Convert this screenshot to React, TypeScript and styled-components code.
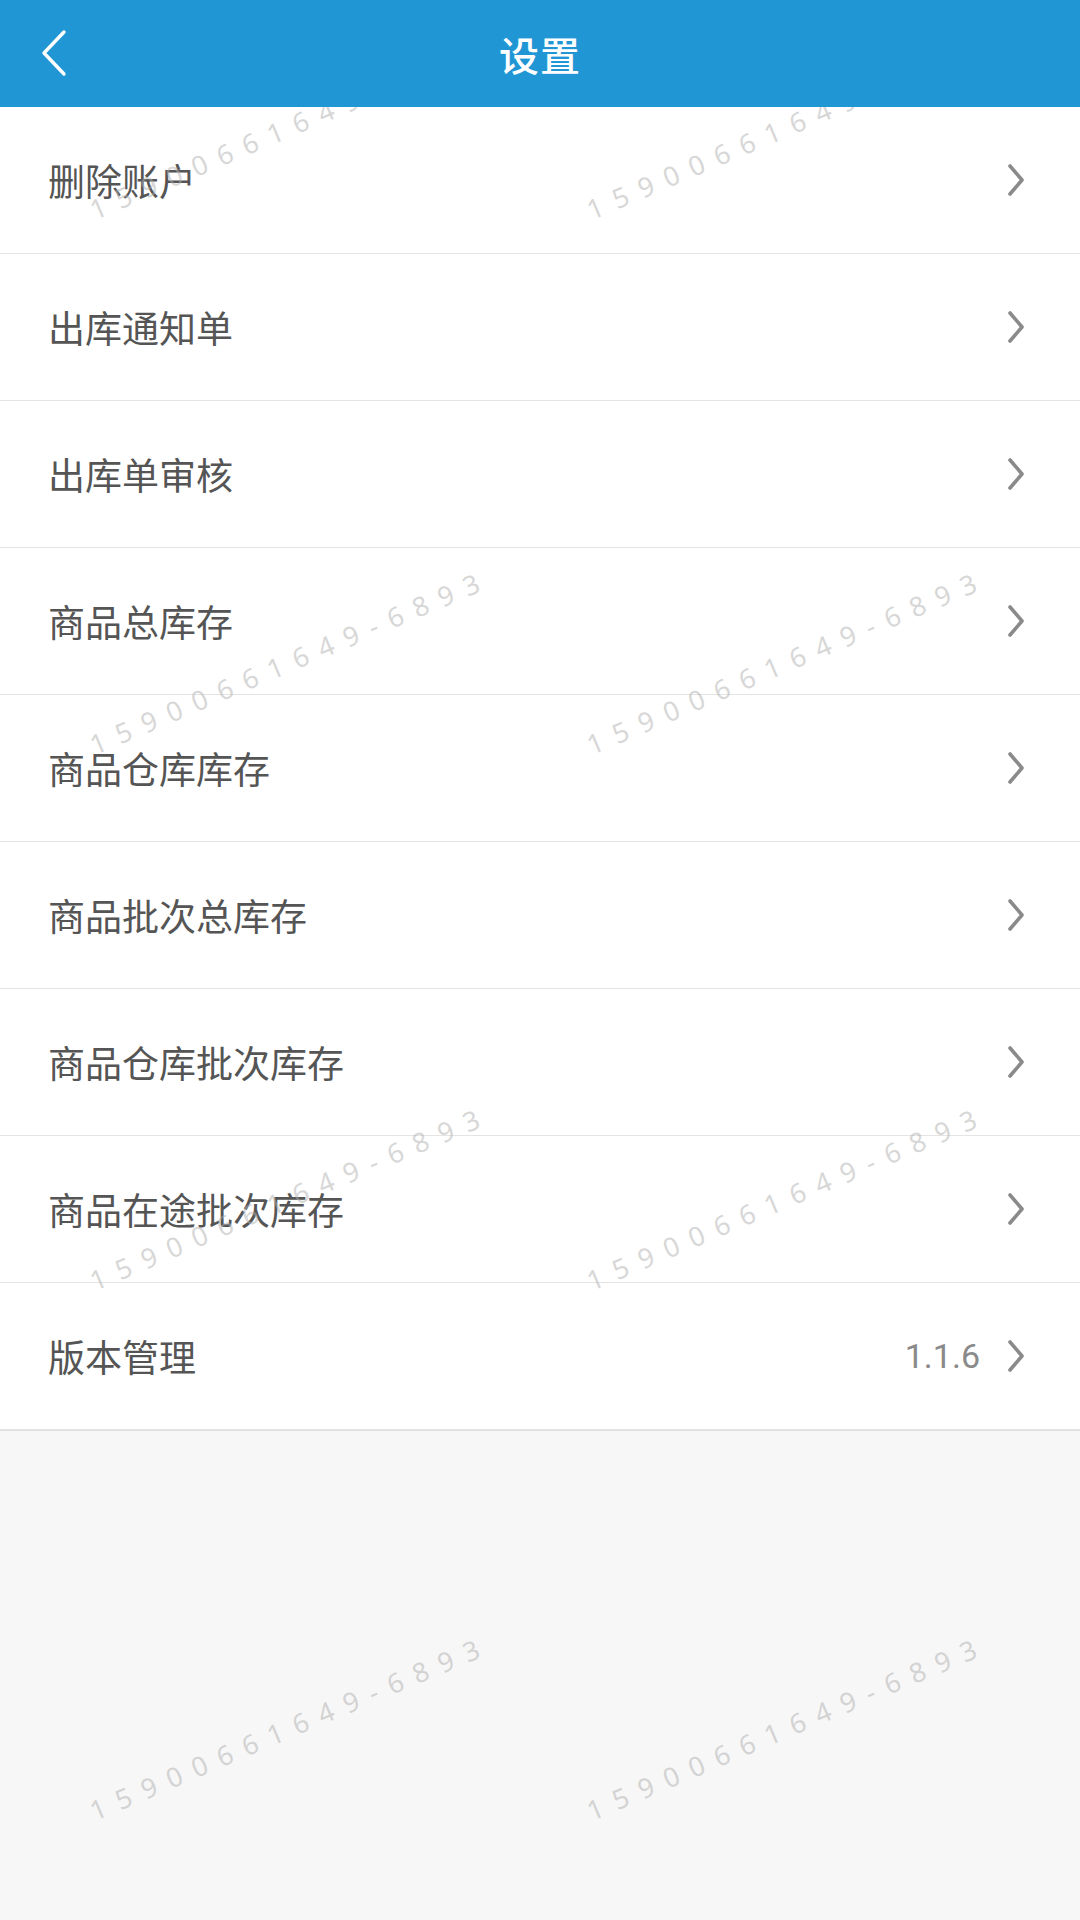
import * as React from 'react'
import styled, { createGlobalStyle } from 'styled-components'

const GlobalStyle = createGlobalStyle`
  html, body {
    margin: 0;
    padding: 0;
    background: #f7f7f7;
  }
  body {
    font-family: Roboto, "Noto Sans", "Noto Sans CJK SC", sans-serif;
  }
  * {
    box-sizing: border-box;
  }
`

const Page = styled.div`
  position: relative;
  width: 1080px;
  min-height: 1920px;
  background: #f7f7f7;
  overflow: hidden;
`

const Header = styled.div`
  position: relative;
  z-index: 2;
  height: 107px;
  background: #2196d4;
  display: flex;
  align-items: center;
  justify-content: center;
`

const BackButton = styled.div`
  position: absolute;
  left: 36px;
  top: 26px;
  width: 40px;
  height: 54px;
  display: flex;
  align-items: center;
  justify-content: center;
`

const Title = styled.h1`
  margin: 0;
  font-family: "Noto Sans CJK SC", sans-serif;
  font-size: 40px;
  font-weight: 500;
  color: #ffffff;
  letter-spacing: 1px;
`

const List = styled.div`
  background: #ffffff;
  border-bottom: 2px solid #e2e2e2;
`

const Row = styled.div<{ $last?: boolean }>`
  height: ${p => (p.$last ? 146 : 147)}px;
  display: flex;
  align-items: center;
  padding: 0 52px 0 48px;
  border-bottom: ${p => (p.$last ? 'none' : '1px solid #e4e4e4')};
`

const Label = styled.span`
  flex: 1;
  font-family: "Noto Sans CJK SC", sans-serif;
  font-size: 37px;
  color: #555555;
`

const Value = styled.span`
  font-family: Roboto, "Noto Sans", sans-serif;
  font-size: 34px;
  color: #8a8a8a;
  margin-right: 24px;
`

const Watermarks = styled.div`
  position: absolute;
  inset: 0;
  z-index: 1;
  pointer-events: none;
`

const Mark = styled.div`
  position: absolute;
  transform: translate(-50%, -50%) rotate(-23deg);
  white-space: nowrap;
  font-family: "Noto Sans", sans-serif;
  font-size: 27px;
  letter-spacing: 12px;
  color: rgba(175, 175, 175, 0.5);
`

const Chevron = () => (
  <svg width="24" height="40" viewBox="0 0 24 40">
    <polyline
      points="6,6 18,20 6,34"
      fill="none"
      stroke="#8a8a8a"
      strokeWidth="3.6"
      strokeLinecap="round"
      strokeLinejoin="round"
    />
  </svg>
)

const BackIcon = () => (
  <svg width="40" height="54" viewBox="0 0 40 54">
    <polyline
      points="28,6 8,27 28,48"
      fill="none"
      stroke="#ffffff"
      strokeWidth="3.4"
      strokeLinecap="round"
      strokeLinejoin="round"
    />
  </svg>
)

const items: { label: string; value?: string }[] = [
  { label: '删除账户' },
  { label: '出库通知单' },
  { label: '出库单审核' },
  { label: '商品总库存' },
  { label: '商品仓库库存' },
  { label: '商品批次总库存' },
  { label: '商品仓库批次库存' },
  { label: '商品在途批次库存' },
  { label: '版本管理', value: '1.1.6' },
]

const markSpots = [126, 661, 1197, 1727].flatMap(y => [
  { x: 290, y },
  { x: 787, y },
])

export default function App() {
  return (
    <Page>
      <GlobalStyle />
      <Header>
        <BackButton>
          <BackIcon />
        </BackButton>
        <Title>设置</Title>
      </Header>
      <List>
        {items.map((item, i) => (
          <Row key={item.label} $last={i === items.length - 1}>
            <Label>{item.label}</Label>
            {item.value && <Value>{item.value}</Value>}
            <Chevron />
          </Row>
        ))}
      </List>
      <Watermarks>
        {markSpots.map((s, i) => (
          <Mark key={i} style={{ left: s.x, top: s.y }}>
            15900661649-6893
          </Mark>
        ))}
      </Watermarks>
    </Page>
  )
}
